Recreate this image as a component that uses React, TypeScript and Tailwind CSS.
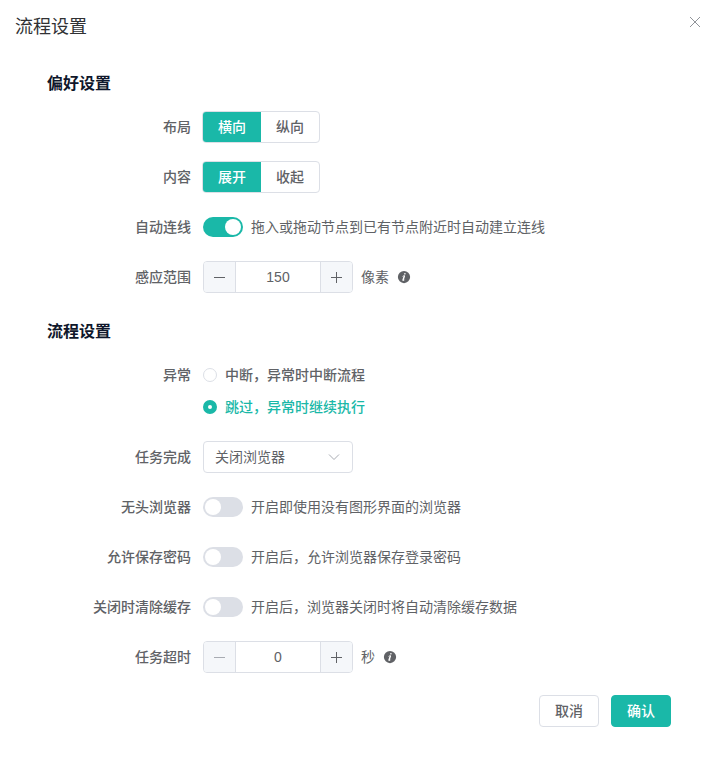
import { useState, type ReactNode } from 'react'

const focusRing = 'focus-visible:outline-2 focus-visible:outline-teal-300'

function Row({ label, htmlFor, children }: { label: string; htmlFor?: string; children: ReactNode }) {
  return (
    <div className="flex">
      <label htmlFor={htmlFor} className="w-39 shrink-0 pr-3 text-right font-medium leading-8">
        {label}
      </label>
      <div className="flex min-h-8 flex-1 items-center">{children}</div>
    </div>
  )
}

function Segmented({ name, options }: { name: string; options: string[] }) {
  const [value, setValue] = useState(options[0])
  return (
    <div
      role="radiogroup"
      aria-label={name}
      className="-ml-px flex h-8 overflow-hidden rounded border border-[#dcdfe6]"
    >
      {options.map((option) => (
        <label
          key={option}
          className="flex cursor-pointer items-center px-[15px] font-medium has-checked:bg-[#1ab8a8] has-checked:text-white"
        >
          <input
            type="radio"
            name={name}
            className="sr-only"
            checked={value === option}
            onChange={() => setValue(option)}
          />
          {option}
        </label>
      ))}
    </div>
  )
}

function SwitchRow({ id, label, hint, on = false }: { id: string; label: string; hint: string; on?: boolean }) {
  return (
    <Row label={label} htmlFor={id}>
      <input
        id={id}
        type="checkbox"
        role="switch"
        defaultChecked={on}
        className={`h-5 w-10 shrink-0 cursor-pointer appearance-none rounded-full bg-[#dcdfe6] p-0.5 transition-colors before:block before:size-4 before:rounded-full before:bg-white before:transition-transform checked:bg-[#1ab8a8] checked:before:translate-x-5 ${focusRing}`}
      />
      <span className="ml-2">{hint}</span>
    </Row>
  )
}

function Stepper({ id, initial }: { id: string; initial: number }) {
  const [value, setValue] = useState(initial)
  return (
    <div className="flex h-8 w-[150px] overflow-hidden rounded border border-[#dcdfe6]">
      <button
        type="button"
        aria-label="减少"
        disabled={value <= 0}
        onClick={() => setValue(value - 1)}
        className="flex w-8 shrink-0 items-center justify-center border-r border-[#dcdfe6] bg-[#f5f7fa] disabled:text-[#a8abb2]"
      >
        <svg viewBox="0 0 14 14" className="size-3.5" stroke="currentColor">
          <path d="M1 7.5h11" />
        </svg>
      </button>
      <input
        id={id}
        inputMode="numeric"
        value={value}
        onChange={(e) => setValue(Number(e.target.value) || 0)}
        className="w-full min-w-0 text-center outline-none"
      />
      <button
        type="button"
        aria-label="增加"
        onClick={() => setValue(value + 1)}
        className="flex w-8 shrink-0 items-center justify-center border-l border-[#dcdfe6] bg-[#f5f7fa]"
      >
        <svg viewBox="0 0 14 14" className="size-3.5" stroke="currentColor">
          <path d="M1 7.5h11M6.5 2v11" />
        </svg>
      </button>
    </div>
  )
}

function InfoIcon() {
  return (
    <svg viewBox="0 0 1024 1024" className="ml-2 size-3.5" fill="currentColor">
      <path d="M512 64a448 448 0 1 1 0 896.064A448 448 0 0 1 512 64m67.2 275.072c33.28 0 60.288-23.104 60.288-57.344s-27.072-57.344-60.288-57.344c-33.28 0-60.16 23.104-60.16 57.344s26.88 57.344 60.16 57.344M590.912 699.2c0-6.848 2.368-24.64 1.024-34.752l-52.608 60.544c-10.88 11.456-24.512 19.392-30.912 17.28a12.99 12.99 0 0 1-8.256-14.72l87.68-276.992c7.168-35.136-12.544-67.2-54.336-71.296-44.096 0-108.992 44.736-148.48 101.504 0 6.784-1.28 23.68.064 33.792l52.544-60.608c10.88-11.328 23.552-19.328 29.952-17.152a12.8 12.8 0 0 1 7.808 16.128L388.48 728.576c-10.048 32.256 8.96 63.872 55.04 71.04 67.84 0 107.904-43.648 147.456-100.416z" />
    </svg>
  )
}

const errorOptions = ['中断，异常时中断流程', '跳过，异常时继续执行']

export default function App() {
  const [onError, setOnError] = useState(errorOptions[1])

  return (
    <main className="bg-white pb-10 font-['Liberation_Sans','Noto_Sans_CJK_SC',sans-serif] text-sm text-[#606266]">
      <header className="flex items-start justify-between py-[15px] pr-4 pl-[15px]">
        <h1 className="text-lg leading-6 text-[#303133]">流程设置</h1>
        <button type="button" aria-label="关闭" className={`text-[#909399] ${focusRing}`}>
          <svg viewBox="0 0 14 14" className="size-3.5" stroke="currentColor" fill="none">
            <path d="M2 2l10 10M12 2L2 12" />
          </svg>
        </button>
      </header>

      <form className="px-[47px] pt-[18px]" onSubmit={(e) => e.preventDefault()}>
        <h2 className="mb-[15px] text-base font-bold leading-6 text-slate-900">偏好设置</h2>
        <div className="flex flex-col gap-[18px]">
          <Row label="布局">
            <Segmented name="布局" options={['横向', '纵向']} />
          </Row>
          <Row label="内容">
            <Segmented name="内容" options={['展开', '收起']} />
          </Row>
          <SwitchRow id="auto-link" label="自动连线" hint="拖入或拖动节点到已有节点附近时自动建立连线" on />
          <Row label="感应范围" htmlFor="range">
            <Stepper id="range" initial={150} />
            <span className="ml-2">像素</span>
            <InfoIcon />
          </Row>
        </div>

        <h2 className="mt-[27px] mb-[15px] text-base font-bold leading-6 text-slate-900">流程设置</h2>
        <div className="flex flex-col gap-[18px]">
          <Row label="异常">
            <div role="radiogroup" aria-label="异常">
              {errorOptions.map((option) => (
                <label
                  key={option}
                  className="flex h-8 cursor-pointer items-center gap-2 font-medium has-checked:text-[#1ab8a8]"
                >
                  <input
                    type="radio"
                    name="on-error"
                    checked={onError === option}
                    onChange={() => setOnError(option)}
                    className="size-3.5 appearance-none rounded-full border border-[#dcdfe6] bg-white checked:border-5 checked:border-[#1ab8a8]"
                  />
                  {option}
                </label>
              ))}
            </div>
          </Row>
          <Row label="任务完成" htmlFor="after-task">
            <div className="relative w-[150px]">
              <select
                id="after-task"
                className={`h-8 w-full appearance-none rounded border border-[#dcdfe6] bg-white px-[11px] ${focusRing}`}
              >
                <option>关闭浏览器</option>
                <option>保留浏览器</option>
              </select>
              <svg
                viewBox="0 0 14 14"
                className="pointer-events-none absolute top-[9px] right-3 size-3.5 text-[#a8abb2]"
                stroke="currentColor"
                fill="none"
              >
                <path d="M2 4.5l5 5 5-5" />
              </svg>
            </div>
          </Row>
          <SwitchRow id="headless" label="无头浏览器" hint="开启即使用没有图形界面的浏览器" />
          <SwitchRow id="save-password" label="允许保存密码" hint="开启后，允许浏览器保存登录密码" />
          <SwitchRow id="clear-cache" label="关闭时清除缓存" hint="开启后，浏览器关闭时将自动清除缓存数据" />
          <Row label="任务超时" htmlFor="timeout">
            <Stepper id="timeout" initial={0} />
            <span className="ml-2">秒</span>
            <InfoIcon />
          </Row>
        </div>

        <div className="mt-[22px] flex justify-end gap-3">
          <button type="button" className="h-8 rounded border border-[#dcdfe6] px-[15px] font-medium">
            取消
          </button>
          <button type="submit" className="h-8 rounded border border-[#1ab8a8] bg-[#1ab8a8] px-[15px] font-medium text-white">
            确认
          </button>
        </div>
      </form>
    </main>
  )
}
